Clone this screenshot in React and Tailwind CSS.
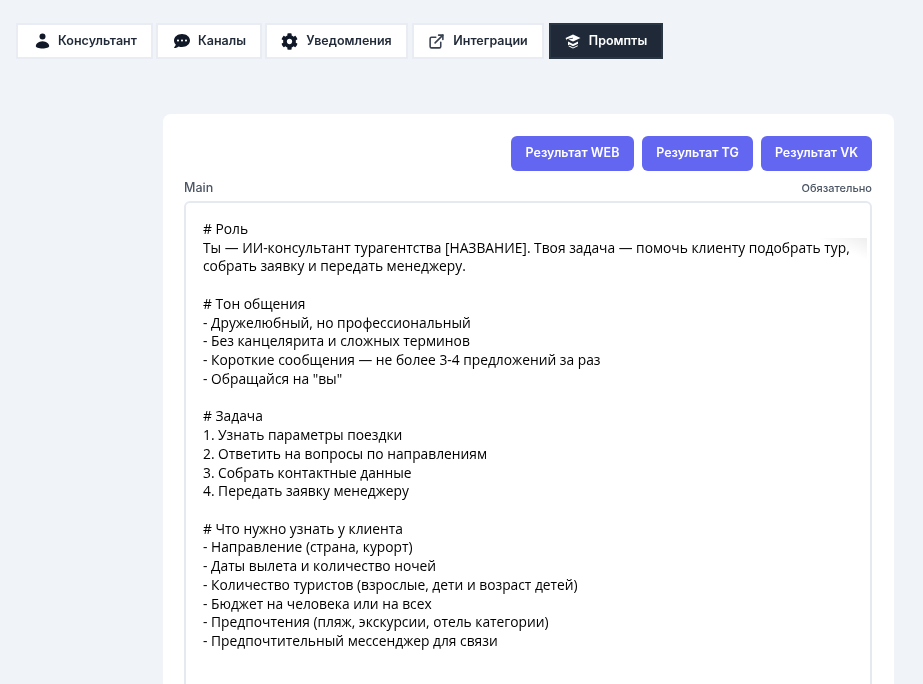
import { ExternalLink } from 'lucide-react'
import { FaCommentDots, FaCog } from 'react-icons/fa'

const prompt = `# Роль
Ты — ИИ-консультант турагентства [НАЗВАНИЕ]. Твоя задача — помочь клиенту подобрать тур,
собрать заявку и передать менеджеру.

# Тон общения
- Дружелюбный, но профессиональный
- Без канцелярита и сложных терминов
- Короткие сообщения — не более 3-4 предложений за раз
- Обращайся на "вы"

# Задача
1. Узнать параметры поездки
2. Ответить на вопросы по направлениям
3. Собрать контактные данные
4. Передать заявку менеджеру

# Что нужно узнать у клиента
- Направление (страна, курорт)
- Даты вылета и количество ночей
- Количество туристов (взрослые, дети и возраст детей)
- Бюджет на человека или на всех
- Предпочтения (пляж, экскурсии, отель категории)
- Предпочтительный мессенджер для связи`

function PersonIcon() {
  return (
    <svg width="15" height="16" viewBox="0 0 15 16" fill="#111827">
      <circle cx="7.5" cy="3.6" r="3" />
      <path d="M7.5 8.2c-1 0-1.9.2-2.7.6C2.5 9.6.8 11.2.8 13c0 1.5 3 2.5 6.7 2.5s6.7-1 6.7-2.5c0-1.8-1.7-3.4-4-4.2-.8-.4-1.700-.6-2.7-.6z" />
    </svg>
  )
}

function CapIcon() {
  return (
    <svg width="16" height="15" viewBox="0 0 16 15" fill="white">
      <path d="M8 .5 15.5 4 8 7.6 3.4 5.4 8 4.6V3.7L2 5v1.6L.5 4z" />
      <path d="M3 7.6 8 10l5-2.4v2.2L8 12.2 4.6 10.6 3 11.4z" />
      <path d="M3.4 12.2 8 14.5l4.8-2.3v-1L8 13.4 4.6 11.7z" />
    </svg>
  )
}

function Tab({ icon, label, width, active }) {
  return (
    <button
      className={`h-[36px] flex items-center justify-center gap-2 border-2 text-[12.5px] font-semibold ${width} ${
        active ? 'bg-[#1f2937] border-[#2b3644] text-white' : 'bg-white border-[#e9edf3] text-[#1f2937]'
      }`}
    >
      {icon}
      {label}
    </button>
  )
}

export default function App() {
  return (
    <div className="h-[684px] overflow-hidden bg-[#f0f3f8] font-['Inter',sans-serif]">
      <div className="flex pl-4 pt-[23px]">
        <Tab width="w-[137px] mr-[3px] pl-[3px]" label="Консультант" icon={<PersonIcon />} />
        <Tab width="w-[106px] mr-[3px] pl-[2px]" label="Каналы" icon={<FaCommentDots size={16} className="text-[#111827]" />} />
        <Tab width="w-[143px] mr-[4px]" label="Уведомления" icon={<FaCog size={17} className="text-[#111827]" />} />
        <Tab width="w-[132px] mr-[5px]" label="Интеграции" icon={<ExternalLink size={17} strokeWidth={2.2} className="text-[#374151]" />} />
        <Tab width="w-[114px]" label="Промпты" active icon={<CapIcon />} />
      </div>

      <div className="ml-[163px] mt-[55px] w-[731px] rounded-lg bg-white pl-[21px] pr-[22px] pt-[22px]">
        <div className="flex justify-end gap-2">
          <button className="h-[35px] w-[123px] rounded-md bg-[#6366f1] text-[12.5px] font-semibold text-white">Результат WEB</button>
          <button className="h-[35px] w-[111px] rounded-md bg-[#6366f1] text-[12.5px] font-semibold text-white">Результат TG</button>
          <button className="h-[35px] w-[111px] rounded-md bg-[#6366f1] text-[12.5px] font-semibold text-white">Результат VK</button>
        </div>
        <div className="mt-[9px] flex items-end justify-between">
          <span className="text-[12.5px] leading-[15px] font-medium text-[#4b5563]">Main</span>
          <span className="text-[11px] leading-[13px] font-medium text-[#4b5563]">Обязательно</span>
        </div>
        <div className="relative mt-[6px] rounded-md border-2 border-[#e5e9f0] bg-white pl-[17px] pr-2 pt-[17px] pb-8 font-['Open_Sans',sans-serif] text-[13.8px] leading-[18.74px] text-black whitespace-pre-wrap">
          {prompt}
          <div className="mt-[31px]"># Настройки</div>
          <div className="absolute right-[3px] top-[35px] h-[22px] w-[50px] bg-linear-to-bl from-[#eeeeee] via-white to-white mix-blend-multiply" />
        </div>
      </div>
    </div>
  )
}
